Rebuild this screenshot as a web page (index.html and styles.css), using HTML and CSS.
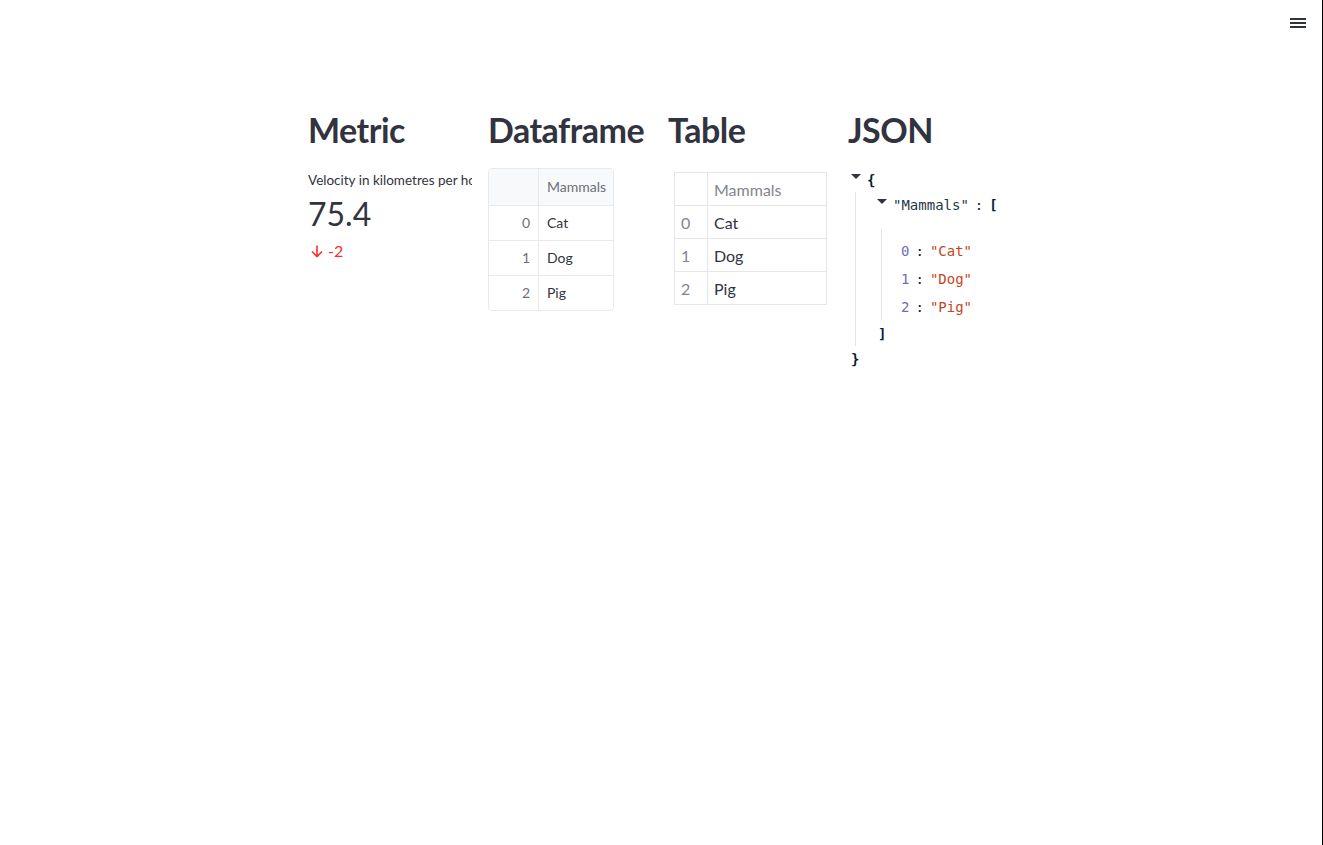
FILE: index.html
```html
<!DOCTYPE html>
<html>
<head>
    <meta charset="utf-8">
    <title>Streamlit demo</title>
    <link rel="stylesheet" href="styles.css">
</head>
<body>
    <div class="app">
        <div class="toolbar">
            <button class="menu-button" aria-label="Main menu">
                <svg width="16" height="10" viewBox="0 0 16 10">
                    <rect x="0" y="0" width="16" height="2" fill="#31333f"/>
                    <rect x="0" y="4" width="16" height="2" fill="#31333f"/>
                    <rect x="0" y="8" width="16" height="2" fill="#31333f"/>
                </svg>
            </button>
        </div>

        <div class="main">
            <div class="columns">
                <div class="column">
                    <h2>Metric</h2>
                    <div class="metric">
                        <div class="metric-label">Velocity in kilometres per hour</div>
                        <div class="metric-value">75.4</div>
                        <div class="metric-delta">
                            <svg width="16" height="16" viewBox="0 0 16 16">
                                <path d="M8 2.5v11M3 8.5l5 5 5-5" fill="none" stroke="#ff2b2b" stroke-width="1.6"/>
                            </svg>
                            <span>-2</span>
                        </div>
                    </div>
                </div>

                <div class="column">
                    <h2>Dataframe</h2>
                    <div class="dataframe">
                        <div class="df-row df-head">
                            <div class="df-index"></div>
                            <div class="df-cell">Mammals</div>
                        </div>
                        <div class="df-row">
                            <div class="df-index">0</div>
                            <div class="df-cell">Cat</div>
                        </div>
                        <div class="df-row">
                            <div class="df-index">1</div>
                            <div class="df-cell">Dog</div>
                        </div>
                        <div class="df-row">
                            <div class="df-index">2</div>
                            <div class="df-cell">Pig</div>
                        </div>
                    </div>
                </div>

                <div class="column">
                    <h2>Table</h2>
                    <table class="table">
                        <thead>
                            <tr><th></th><th>Mammals</th></tr>
                        </thead>
                        <tbody>
                            <tr><th>0</th><td>Cat</td></tr>
                            <tr><th>1</th><td>Dog</td></tr>
                            <tr><th>2</th><td>Pig</td></tr>
                        </tbody>
                    </table>
                </div>

                <div class="column">
                    <h2>JSON</h2>
                    <div class="json">
                        <div class="json-line"><span class="caret"></span><span class="brace">{</span></div>
                        <div class="json-body">
                            <div class="json-line"><span class="caret"></span><span class="key">"Mammals"</span><span class="colon">:</span><span class="brace">[</span></div>
                            <div class="json-array">
                                <div class="json-line"><span class="idx">0</span><span class="colon">:</span><span class="str">"Cat"</span></div>
                                <div class="json-line"><span class="idx">1</span><span class="colon">:</span><span class="str">"Dog"</span></div>
                                <div class="json-line"><span class="idx">2</span><span class="colon">:</span><span class="str">"Pig"</span></div>
                            </div>
                            <div class="json-line close-bracket"><span class="brace">]</span></div>
                        </div>
                        <div class="json-line close-brace"><span class="brace">}</span></div>
                    </div>
                </div>
            </div>
        </div>
    </div>
</body>
</html>
```

FILE: styles.css
```css
body {
    margin: 0;
    font-family: 'Lato', 'Noto Sans', sans-serif;
    color: #31333f;
    background-color: #ffffff;
}

.app {
    min-height: 100vh;
    border-right: 1px solid #000000;
    box-sizing: border-box;
}

.toolbar {
    display: flex;
    justify-content: flex-end;
    padding: 12px 10px 0 0;
    height: 48px;
    box-sizing: border-box;
}

.menu-button {
    background: none;
    border: none;
    padding: 6px;
    cursor: pointer;
    line-height: 0;
    height: 22px;
}

.menu-button svg {
    display: block;
}

.main {
    width: 706px;
    margin: 0 auto;
    padding-top: 62px;
}

.columns {
    display: flex;
    gap: 16px;
    width: 704px;
}

.column {
    flex: 1;
    min-width: 0;
}

h2 {
    font-size: 34px;
    font-weight: 700;
    line-height: 40px;
    margin: 0 0 18px 0;
    letter-spacing: -0.5px;
}

/* metric */
.metric-label {
    font-size: 13.5px;
    white-space: nowrap;
    overflow: hidden;
    height: 24px;
    line-height: 24px;
}

.metric-value {
    font-size: 32px;
    line-height: 46px;
    margin-top: -1px;
}

.metric-delta {
    display: flex;
    align-items: center;
    gap: 3px;
    color: #ff2b2b;
    font-size: 16px;
    line-height: 20px;
    margin-top: 4px;
    margin-left: 1px;
}

/* dataframe */
.dataframe {
    width: 124px;
    border: 1px solid #e6e9ef;
    border-radius: 4px;
    font-size: 14px;
    overflow: hidden;
}

.df-row {
    display: flex;
    height: 34px;
    border-top: 1px solid #e6e9ef;
}

.df-row.df-head {
    border-top: none;
    height: 36px;
    background-color: #f8f9fb;
    color: #6d6f78;
}

.df-index {
    width: 50px;
    border-right: 1px solid #e6e9ef;
    text-align: right;
    padding-right: 8px;
    box-sizing: border-box;
    line-height: 34px;
    color: #6d6f78;
}

.df-head .df-index,
.df-head .df-cell {
    line-height: 36px;
}

.df-cell {
    flex: 1;
    padding-left: 8px;
    line-height: 34px;
}

/* table */
.table {
    border-collapse: collapse;
    font-size: 16px;
    margin-top: 22px;
    margin-left: 6px;
}

.table th,
.table td {
    border: 1px solid #e6e6e8;
    padding: 0 6px;
    height: 32px;
    text-align: left;
    font-weight: 400;
}

.table thead th {
    color: #83858c;
}

.table tbody th {
    color: #83858c;
    width: 20px;
}

.table td {
    width: 106px;
}

/* json */
.json {
    font-family: 'DejaVu Sans Mono', monospace;
    font-size: 14px;
    margin-top: -1px;
}

.json-line {
    display: flex;
    align-items: center;
    height: 25px;
}

.caret {
    width: 0;
    height: 0;
    border-left: 5px solid transparent;
    border-right: 5px solid transparent;
    border-top: 5px solid #31333f;
    margin: 0 6px 6px 3px;
}

.brace {
    color: #0b1f33;
    font-weight: 700;
}

.key {
    color: #1f3a44;
}

.colon {
    color: #0b1f33;
    margin: 0 6px;
}

.idx {
    color: #6c6cc0;
}

.str {
    color: #c4461c;
}

.json-body {
    margin-left: 7px;
    padding-left: 18px;
    border-left: 1px solid #e3e3e3;
}

.json-array {
    margin: 12px 0 0 7px;
    padding: 8px 0 0 19px;
    border-left: 1px solid #e3e3e3;
}

.json-array .json-line {
    height: 28px;
}

.close-bracket {
    padding-left: 4px;
}

.close-brace {
    padding-left: 3px;
}
```
